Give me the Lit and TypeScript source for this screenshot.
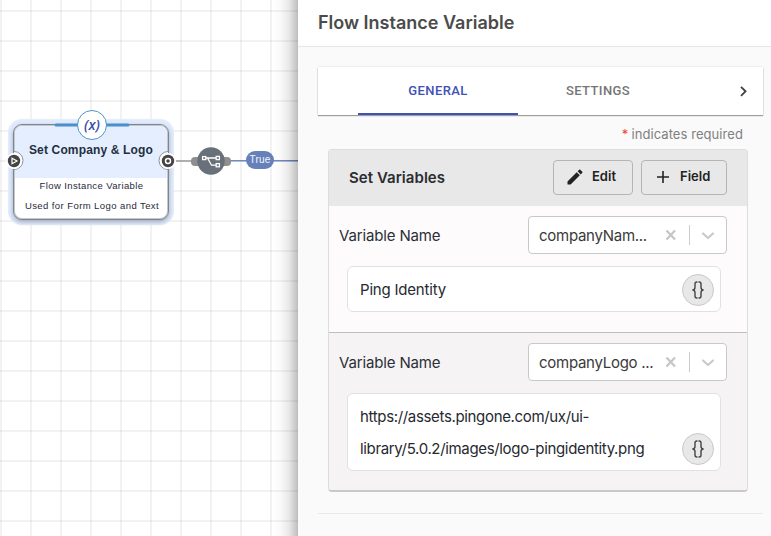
import { LitElement, html, css } from "lit";
import { customElement, property } from "lit/decorators.js";

@customElement("flow-canvas")
class FlowCanvas extends LitElement {
  static styles = css`
    :host {
      position: relative;
      display: block;
      overflow: hidden;
      background-color: #fff;
      background-image: linear-gradient(90deg, rgba(0, 0, 0, 0.05) 2px, transparent 2px),
        linear-gradient(rgba(0, 0, 0, 0.05) 2px, transparent 2px);
      background-size: 30px 30px;
      background-position: 0 0, 0 10px;
      font-family: "Liberation Sans", Arial, sans-serif;
    }
    .links {
      position: absolute;
      left: 0;
      top: 0;
      width: 310px;
      height: 536px;
    }
    .node {
      position: absolute;
      left: 13px;
      top: 124px;
      width: 156px;
      height: 96px;
      box-sizing: border-box;
      padding: 1px;
      border: 1px solid #7d858d;
      border-radius: 9px;
      background: #fff;
      box-shadow: inset 0 0 0 1px rgba(125, 133, 141, 0.45), 0 2px 4px 0 rgba(40, 50, 70, 0.35),
        0 0 1px 5px #e1ebfc;
      color: #23303f;
      text-align: center;
      white-space: nowrap;
    }
    .head {
      height: 52px;
      border-radius: 7px 7px 0 0;
      background: #e4eefe;
      box-sizing: border-box;
      padding-top: 15px;
      font-size: 12px;
      line-height: 18px;
      font-weight: 700;
      letter-spacing: 0.15px;
    }
    .line {
      font-size: 9.5px;
      line-height: 20px;
      height: 20px;
      color: #1f2a3a;
      letter-spacing: 0.42px;
      padding-left: 2px;
    }
    .line.first {
      margin-top: -2px;
      padding-left: 1px;
      letter-spacing: 0.38px;
    }
    .pill {
      position: absolute;
      left: 246px;
      top: 151px;
      width: 28px;
      height: 18px;
      border-radius: 9px;
      background: #6681b9;
      color: #f4f6fb;
      font-size: 10px;
      line-height: 18px;
      letter-spacing: 0.2px;
      text-align: center;
    }
    .badge {
      position: absolute;
      left: 77px;
      top: 110px;
      width: 30px;
      height: 30px;
      box-sizing: border-box;
      border: 1px solid #4b94cd;
      border-radius: 50%;
      background: #fff;
      color: #3c4ca8;
      font: italic 600 14px/27px "Open Sans", sans-serif;
      text-align: center;
    }
    .shade {
      position: absolute;
      right: 0;
      top: 0;
      bottom: 0;
      width: 26px;
      background: linear-gradient(
        90deg,
        rgba(0, 0, 0, 0),
        rgba(0, 0, 0, 0.02) 30%,
        rgba(0, 0, 0, 0.09) 65%,
        rgba(0, 0, 0, 0.26)
      );
    }
  `;

  render() {
    return html`
      <div class="node">
        <div class="head">Set Company &amp; Logo</div>
        <div class="line first">Flow Instance Variable</div>
        <div class="line">Used for Form Logo and Text</div>
      </div>
      <svg class="links" viewBox="0 0 310 536">
        <path d="M56 125H128" stroke="#4a90cb" stroke-width="3" stroke-linecap="round" />
        <path d="M176 161H194" stroke="#999" stroke-width="1.500" />
        <path d="M229 160.800H310" stroke="#7189c0" stroke-width="1.500" />
        <rect x="191" y="157" width="12" height="9" rx="4" fill="#8f8f8f" />
        <rect x="219" y="157" width="12" height="9" rx="4" fill="#8f8f8f" />
        <circle cx="211" cy="161" r="13.700" fill="#687079" />
        <g fill="none" stroke="#fff" stroke-width="1.300">
          <rect x="202.600" y="156.600" width="3.200" height="3" />
          <rect x="216.200" y="156.400" width="3.200" height="3.200" />
          <rect x="216.200" y="163.600" width="3.200" height="3.200" />
          <path d="M206 158H216M207.500 158L211.500 165.200H216" />
        </g>
        <g>
          <path d="M14 151.500A9 9 0 0 1 14 169.500" fill="#fff" stroke="#8a929a" />
          <circle cx="14" cy="161" r="8" fill="#fff" />
          <circle cx="14" cy="161" r="6.200" fill="#444" />
          <path d="M12 158.300L17 161L12 163.700Z" fill="#444" stroke="#fff" stroke-width="1.200" />
          <path d="M168 151.500A9 9 0 0 0 168 169.500" fill="#fff" stroke="#8a929a" />
          <circle cx="168" cy="161" r="8" fill="#fff" />
          <circle cx="168" cy="161" r="6.200" fill="#444" />
          <circle cx="168" cy="161" r="2.500" fill="#444" stroke="#fff" stroke-width="1.500" />
        </g>
      </svg>
      <div class="badge">(x)</div>
      <div class="shade"></div>
      <div class="pill">True</div>
    `;
  }
}

@customElement("variable-row")
class VariableRow extends LitElement {
  @property() name = "";
  @property({ attribute: false }) lines: string[] = [];

  static styles = css`
    :host {
      display: block;
      padding: 10px 20px 20px 10px;
    }
    .top {
      display: flex;
      justify-content: space-between;
      align-items: center;
      height: 38px;
    }
    .label {
      font-size: 15px;
      letter-spacing: -0.15px;
      color: #2b2f36;
    }
    .select {
      display: flex;
      align-items: center;
      box-sizing: border-box;
      width: 199px;
      height: 38px;
      border: 1px solid #c9c9c9;
      border-radius: 4px;
      background: #fff;
      color: #3a3a3a;
      font-size: 15px;
      padding-left: 10px;
    }
    .value {
      width: 126px;
      white-space: nowrap;
      letter-spacing: -0.27px;
    }
    .icons {
      width: 60px;
      height: 36px;
      flex: none;
    }
    .box {
      display: flex;
      align-items: flex-end;
      justify-content: space-between;
      box-sizing: border-box;
      width: 374px;
      margin: 12px 0 0 8px;
      padding: 6px 6px 6px 12px;
      border: 1px solid #e0e1e6;
      border-radius: 6px;
      background: #fff;
      font-size: 15px;
      line-height: 32px;
      color: #26292f;
    }
    .text {
      white-space: nowrap;
      letter-spacing: -0.34px;
      padding-top: 1px;
      margin-bottom: -1px;
    }
    .text.short {
      letter-spacing: -0.2px;
    }
    .brace {
      width: 32px;
      height: 32px;
      flex: none;
      box-sizing: border-box;
      border: 1px solid #d0c6c9;
      border-radius: 50%;
      background: #e8e8e8;
      margin-bottom: -1px;
    }
    .brace svg {
      display: block;
    }
  `;

  render() {
    const short = this.lines.length === 1;
    return html`
      <div class="top">
        <span class="label">Variable Name</span>
        <div class="select">
          <span class="value">${this.name}</span>
          <svg class="icons" viewBox="0 0 60 36" fill="none">
            <path d="M1.500 13.500L10 22.500M10 13.500L1.500 22.500" stroke="#c6c6c6" stroke-width="2.300" />
            <path d="M24.500 8V28" stroke="#ccc" />
            <path d="M38 16.500L43 21L48 16.500" stroke="#c9c9c9" stroke-width="2.200" stroke-linecap="round" stroke-linejoin="round" />
          </svg>
        </div>
      </div>
      <div class="box">
        <div class="text ${short ? "short" : ""}">${this.lines.map((l) => html`<div>${l}</div>`)}</div>
        <div class="brace">
          <svg width="30" height="30" viewBox="0 0 30 30" fill="none" stroke="#444" stroke-width="1.400">
            <path d="M14.500 7H13.800Q12 7 12 9V12.500Q12 14.600 9.500 15Q12 15.400 12 17.500V21Q12 23 13.800 23H14.500" />
            <path d="M15.500 7H16.200Q18 7 18 9V12.500Q18 14.600 20.500 15Q18 15.400 18 17.500V21Q18 23 16.200 23H15.500" />
          </svg>
        </div>
      </div>
    `;
  }
}

@customElement("app-root")
class AppRoot extends LitElement {
  static styles = css`
    :host {
      display: grid;
      grid-template-columns: 298px 1fr;
      width: 771px;
      height: 536px;
      overflow: hidden;
      font-family: Inter, "Liberation Sans", sans-serif;
    }
    .panel {
      background: #fafafa;
    }
    .title {
      box-sizing: border-box;
      height: 47px;
      padding: 10px 0 0 20px;
      border-bottom: 1px solid #e5e5ee;
      background: #fff;
      font-size: 18px;
      line-height: 26px;
      font-weight: 600;
      color: #4b4b4b;
      letter-spacing: 0;
    }
    .tabs {
      display: flex;
      width: 445px;
      height: 48px;
      margin: 20px 0 0 20px;
      box-sizing: border-box;
      padding-left: 40px;
      background: #fff;
      box-shadow: 0 1px 1px rgba(0, 0, 0, 0.35), 0 0 2px rgba(0, 0, 0, 0.12);
      font: 500 13px/47px Roboto, sans-serif;
      letter-spacing: 0.4px;
      color: #757575;
      text-align: center;
    }
    .tab {
      width: 160px;
      height: 48px;
      box-sizing: border-box;
    }
    .tab.on {
      color: #3f51b5;
      border-bottom: 2px solid #3f51b5;
    }
    .next {
      margin-left: auto;
      width: 40px;
      height: 48px;
    }
    .required {
      display: flex;
      justify-content: flex-end;
      gap: 3px;
      margin-right: 28px;
      height: 34px;
      line-height: 39px;
      font-size: 13px;
      color: #808080;
      letter-spacing: 0.07px;
    }
    .star {
      color: #f0441e;
    }
    .card {
      box-sizing: border-box;
      width: 420px;
      height: 343px;
      margin-left: 30px;
      border: 1px solid #dcdde1;
      border-bottom: 2px solid #c9c8cc;
      border-radius: 4px;
      overflow: hidden;
      background: #f5f3f4;
    }
    .bar {
      display: flex;
      align-items: center;
      gap: 8px;
      height: 56px;
      box-sizing: border-box;
      padding: 0 20px 2px;
      background: #e8e8e8;
    }
    .bar h2 {
      margin: 0 auto 0 0;
      font-size: 15px;
      font-weight: 600;
      letter-spacing: 0.05px;
      color: #2b2d31;
    }
    .btn {
      display: flex;
      align-items: center;
      gap: 7px;
      box-sizing: border-box;
      width: 80px;
      height: 35px;
      padding: 0 0 2px 11px;
      border: 1px solid #b5b5b5;
      border-radius: 4px;
      font-size: 13px;
      font-weight: 600;
      color: #222;
    }
    .btn.wide {
      width: 86px;
    }
    .btn svg {
      margin-top: 2px;
    }
    .first {
      height: 127px;
      box-sizing: border-box;
      border-bottom: 1px solid #bfbfc2;
      background: #fdfbfc;
    }
    .rule {
      width: 445px;
      height: 1px;
      margin: 21px 0 0 20px;
      background: #e9e9e9;
    }
  `;

  render() {
    return html`
      <flow-canvas></flow-canvas>
      <main class="panel">
        <header class="title">Flow Instance Variable</header>
        <nav class="tabs">
          <div class="tab on">GENERAL</div>
          <div class="tab">SETTINGS</div>
          <svg class="next" viewBox="0 0 40 48" fill="none">
            <path d="M18 19.800L22.500 24.300L18 28.800" stroke="#444" stroke-width="1.900" />
          </svg>
        </nav>
        <div class="required"><span class="star">*</span><span>indicates required</span></div>
        <section class="card">
          <div class="bar">
            <h2>Set Variables</h2>
            <div class="btn">
              <svg width="20" height="20" viewBox="0 0 24 24" fill="#222">
                <path d="M3 17.250V21h3.750L17.810 9.940l-3.750-3.750L3 17.250zM20.710 7.040a1 1 0 0 0 0-1.410l-2.340-2.340a1 1 0 0 0-1.410 0l-1.830 1.830 3.750 3.750 1.830-1.830z" />
              </svg>
              Edit
            </div>
            <div class="btn wide">
              <svg width="20" height="20" viewBox="0 0 20 20" fill="none" stroke="#222" stroke-width="1.600">
                <path d="M10 4V16M4 10H16" />
              </svg>
              Field
            </div>
          </div>
          <variable-row class="first" name="companyNam..." .lines=${["Ping Identity"]}></variable-row>
          <variable-row
            name="companyLogo ..."
            .lines=${["https://assets.pingone.com/ux/ui-", "library/5.0.2/images/logo-pingidentity.png"]}
          ></variable-row>
        </section>
        <div class="rule"></div>
      </main>
    `;
  }
}
